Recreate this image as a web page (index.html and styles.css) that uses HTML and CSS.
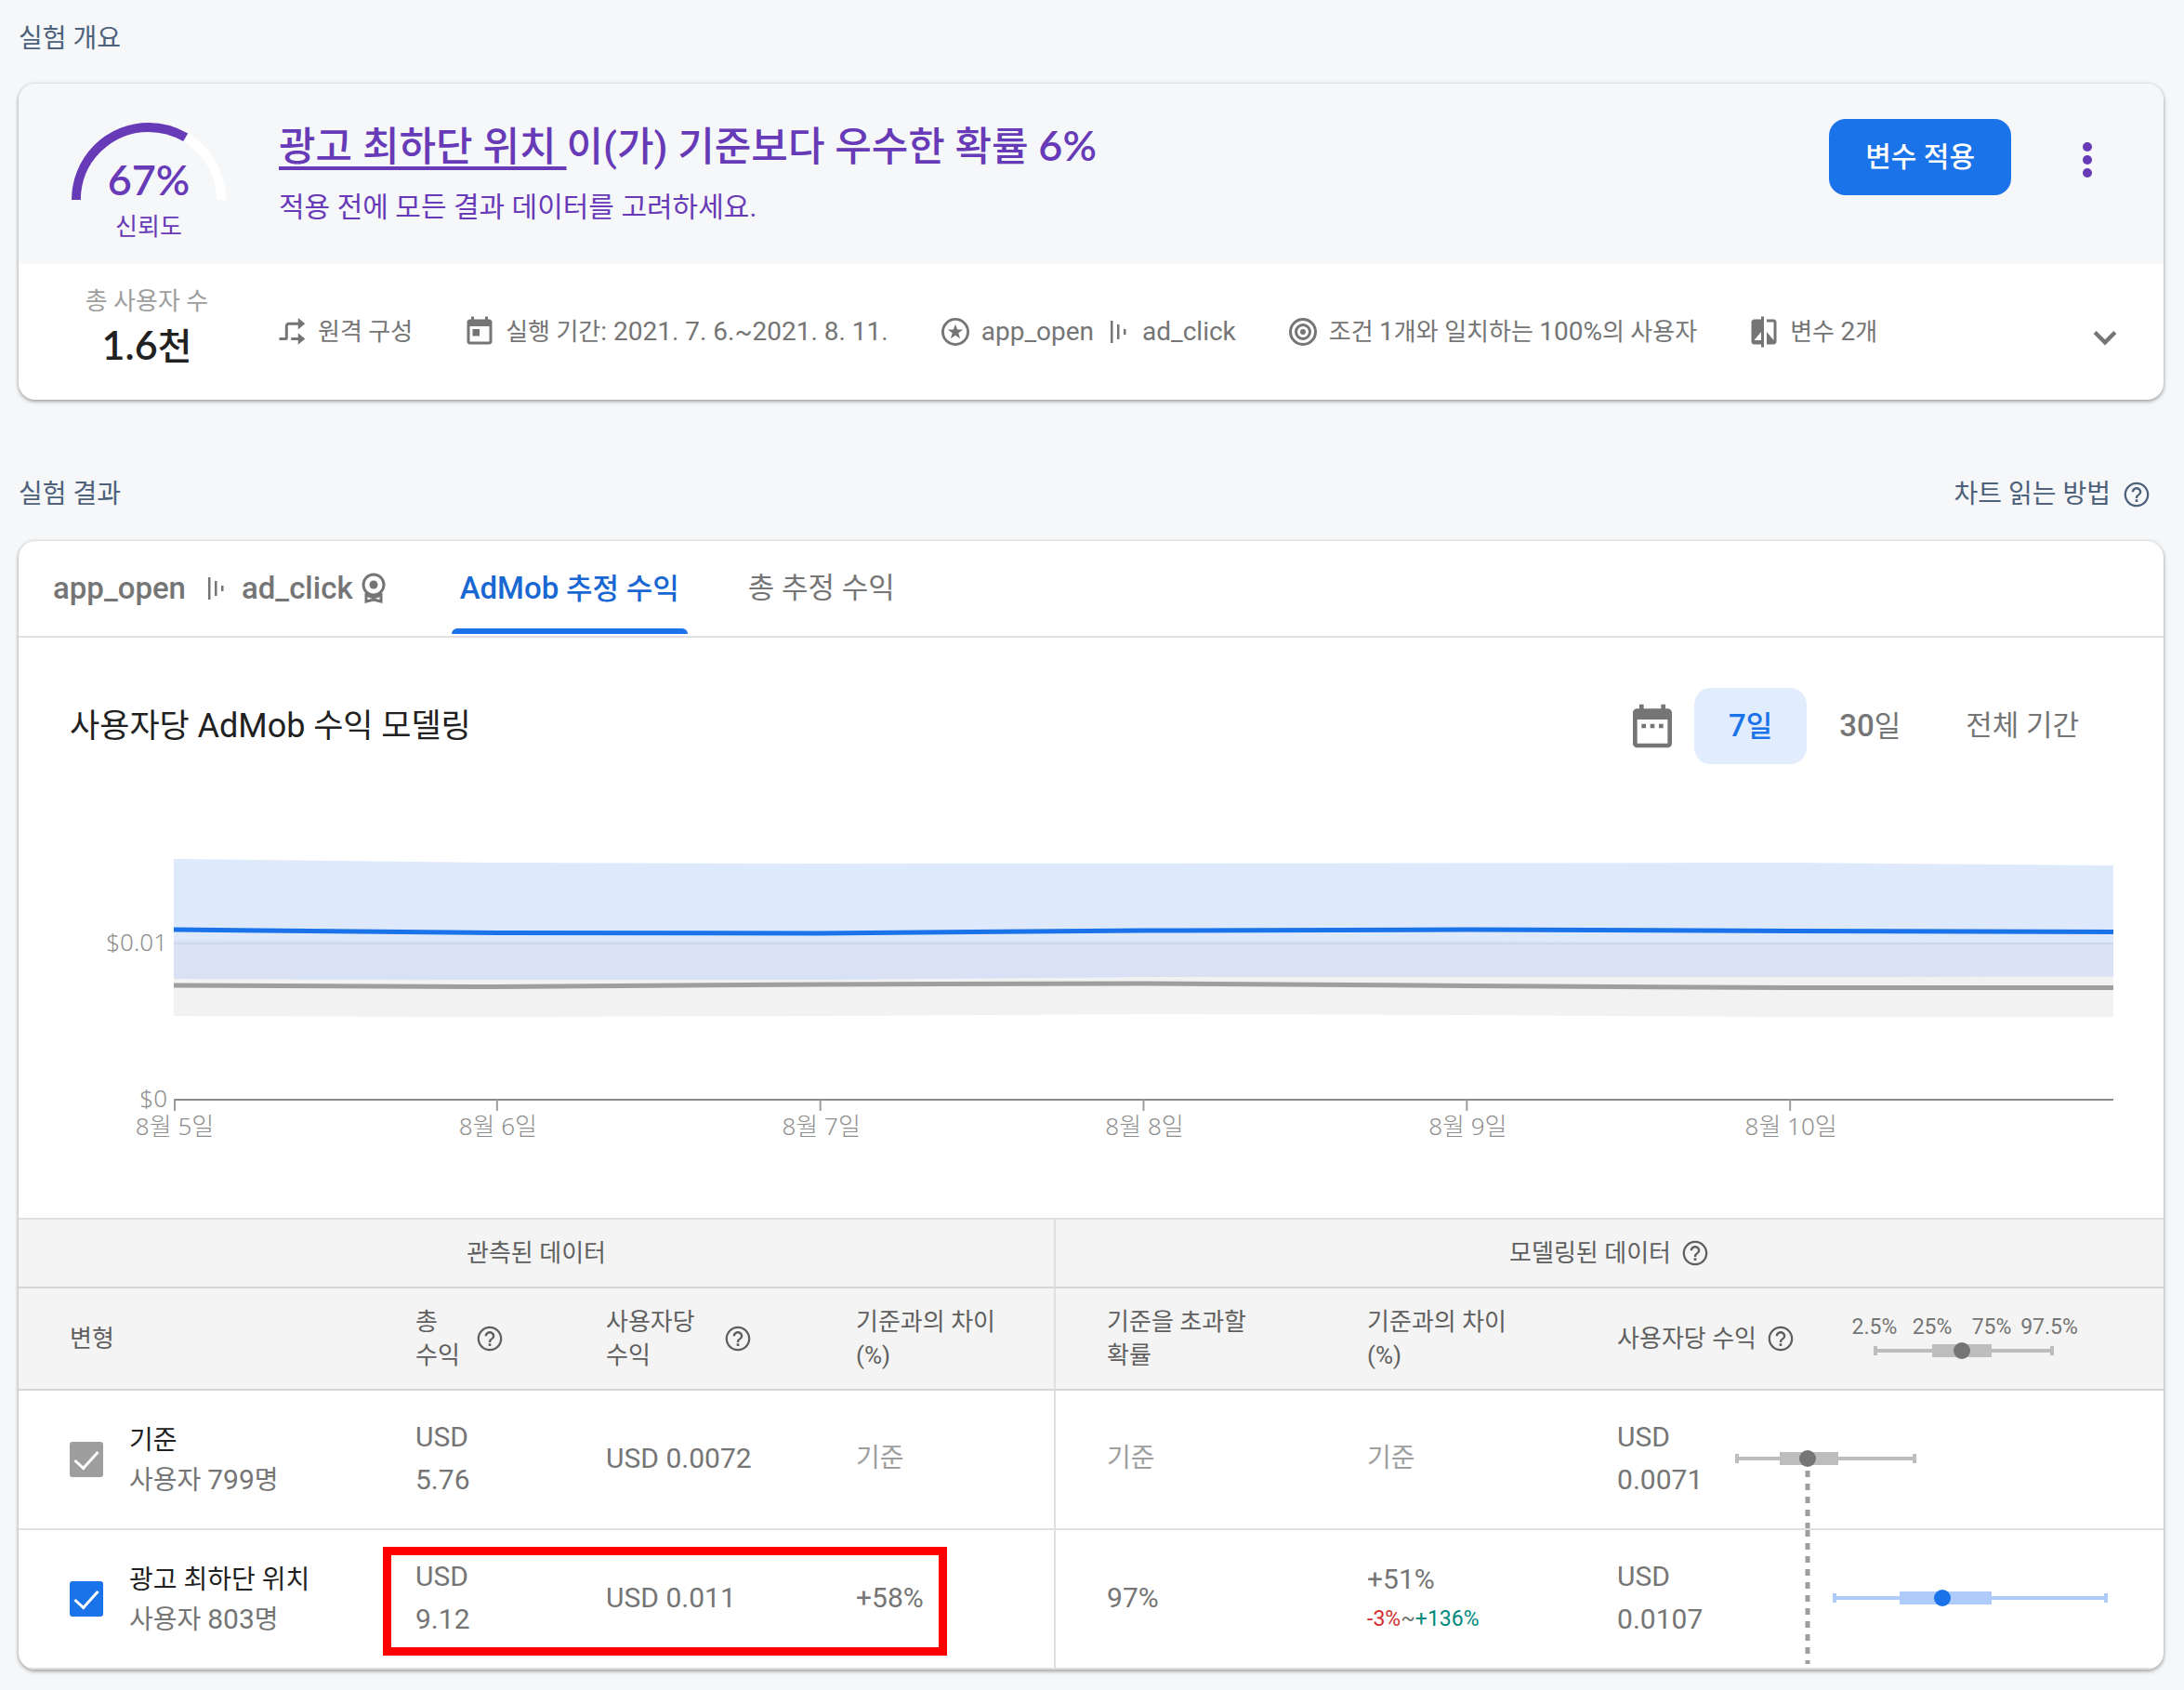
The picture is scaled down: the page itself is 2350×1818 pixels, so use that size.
FILE: index.html
```html
<!DOCTYPE html>
<html lang="ko">
<head>
<meta charset="utf-8">
<meta name="viewport" content="width=device-width, initial-scale=1">
<title>실험 결과</title>
<link rel="stylesheet" href="styles.css">
</head>
<body>
<svg class="sprite" aria-hidden="true">
  <symbol id="help" viewBox="0 0 24 24"><path d="M11 18h2v-2h-2v2zm1-16C6.480 2 2 6.480 2 12s4.480 10 10 10 10-4.480 10-10S17.520 2 12 2zm0 18.300c-4.580 0-8.300-3.720-8.300-8.300S7.420 3.700 12 3.700s8.300 3.720 8.300 8.300-3.720 8.300-8.300 8.300zM12 6c-2.210 0-4 1.790-4 4h1.800c0-1.200.99-2.200 2.200-2.200s2.200 1 2.200 2.200c0 2-3.100 1.750-3.100 5h1.800c0-2.250 3.100-2.500 3.100-5 0-2.210-1.790-4-4-4z"/></symbol>
  <symbol id="funnel" viewBox="0 0 18 24"><path d="M1 0h2.500v24H1zM8 4h2.500v16H8zM15 9h2.500v6H15z"/></symbol>
</svg>
<main class="page">
  <header class="section-head"><h2>실험 개요</h2></header>

  <section class="card overview">
    <div class="summary">
      <div class="gauge">
        <svg class="gauge-arc" viewBox="0 0 168 84"><path class="gauge-track" d="M5 84A79 79 0 0 1 163 84"/><path class="gauge-value" pathLength="100" d="M5 84A79 79 0 0 1 163 84"/></svg>
        <strong>67%</strong>
        <span>신뢰도</span>
      </div>
      <div class="headline">
        <h1><a href="#variant">광고 최하단 위치 </a>이(가) 기준보다 우수한 확률 <span class="latin">6%</span></h1>
        <p>적용 전에 모든 결과 데이터를 고려하세요.</p>
      </div>
      <button class="primary" type="button">변수 적용</button>
      <button class="more" type="button" aria-label="더보기"><svg viewBox="0 0 10 38"><circle cx="5" cy="5" r="5"/><circle cx="5" cy="19" r="5"/><circle cx="5" cy="33" r="5"/></svg></button>
    </div>
    <div class="details">
      <div class="total"><span>총 사용자 수</span><strong><span class="latin">1.6</span>천</strong></div>
      <ul class="meta">
        <li><svg class="icon" viewBox="0 0 24 24"><path d="M3 16h4.200V8c0-1.700 1.100-2.800 2.800-2.800h6.500V2l5 4.200-5 4.200V7.200H10c-.6 0-.8.2-.8.8v8.500c0 .9-.6 1.500-1.500 1.500H3zM11.500 16h5v-3.200l5 4.200-5 4.200V18h-5z"/></svg>원격 구성</li>
        <li><svg class="icon" viewBox="0 0 24 24"><path d="M19 3h-1V1h-2v2H8V1H6v2H5c-1.110 0-2 .9-2 2v14c0 1.100.89 2 2 2h14c1.100 0 2-.9 2-2V5c0-1.100-.9-2-2-2zm0 16H5V8h14v11zM7 10h5v5H7z"/></svg><span>실행 기간<span class="latin">: 2021. 7. 6.~2021. 8. 11.</span></span></li>
        <li><svg class="icon" viewBox="0 0 24 24"><path fill-rule="evenodd" d="M12 2a10 10 0 1 0 0 20 10 10 0 0 0 0-20zm0 1.900a8.100 8.100 0 1 1 0 16.200 8.100 8.100 0 0 1 0-16.200z"/><path d="M12 6.500l1.400 3.900h4.100l-3.300 2.500 1.200 4-3.400-2.400-3.400 2.400 1.200-4-3.300-2.500h4.100z"/></svg><span class="latin">app_open</span><svg class="funnel"><use href="#funnel"/></svg><span class="latin">ad_click</span></li>
        <li><svg class="icon rings" viewBox="0 0 24 24"><circle cx="12" cy="12" r="9"/><circle cx="12" cy="12" r="5"/><circle class="bull" cx="12" cy="12" r="2"/></svg><span>조건 <span class="latin">1</span>개와 일치하는 <span class="latin">100%</span>의 사용자</span></li>
        <li><svg class="icon" viewBox="0 0 24 24"><path d="M10 3H5c-1.100 0-2 .9-2 2v14c0 1.100.9 2 2 2h5v2h2V1h-2v2zm0 15H5l5-6v6zm9-15h-5v2h5v13l-5-6v9h5c1.100 0 2-.9 2-2V5c0-1.100-.9-2-2-2z"/></svg><span>변수 <span class="latin">2</span>개</span></li>
      </ul>
      <button class="expand" type="button" aria-label="펼치기"><svg viewBox="0 0 24 16"><path d="M2 2l10 10L22 2"/></svg></button>
    </div>
  </section>

  <header class="section-head results-head">
    <h2>실험 결과</h2>
    <a href="#help">차트 읽는 방법<svg class="help"><use href="#help"/></svg></a>
  </header>

  <section class="card results">
    <nav class="tabs">
      <button class="tab" type="button"><span class="latin">app_open</span><svg class="funnel"><use href="#funnel"/></svg><span class="latin">ad_click</span><svg class="ribbon" viewBox="0 0 26 34"><path class="ring" d="M13 2a11 11 0 1 1 0 22 11 11 0 0 1 0-22zM5 22v9l8-2 8 2v-9"/><path class="ring" d="M5 24l8 3 8-3"/><circle cx="13" cy="13" r="4.500"/></svg></button>
      <button class="tab active" type="button"><span><span class="latin">AdMob</span> 추정 수익</span></button>
      <button class="tab" type="button">총 추정 수익</button>
    </nav>

    <div class="model">
      <div class="model-head">
        <h3>사용자당 <span class="latin">AdMob</span> 수익 모델링</h3>
        <div class="ranges">
          <svg class="calendar" viewBox="0 0 24 24"><path d="M9 11H7v2h2v-2zm4 0h-2v2h2v-2zm4 0h-2v2h2v-2zm2-7h-1V2h-2v2H8V2H6v2H5c-1.110 0-2 .9-2 2v14c0 1.100.89 2 2 2h14c1.100 0 2-.9 2-2V6c0-1.100-.9-2-2-2zm0 16H5V9h14v11z"/></svg>
          <button class="range active" type="button"><span class="latin">7</span>일</button>
          <button class="range" type="button"><span class="latin">30</span>일</button>
          <button class="range" type="button">전체 기간</button>
        </div>
      </div>
      <div class="chart">
        <div class="y-axis"><span>$0.01</span><span>$0</span></div>
        <svg class="plot" viewBox="0 0 2088 288" preserveAspectRatio="none">
          <path fill="#f2f2f2" d="M0 101L348 102L1044 102L2088 104V184L1740 184L1392 182L1044 181L696 183L348 184L0 183Z"/>
          <path fill="#dfe9fc" d="M0 14L348 18L696 19L1740 18L2088 21V140.500L1740 141L1392 141L1044 141L696 144L348 144L0 143Z"/>
          <path fill="#d8e2f4" d="M0 101L348 102L1044 102L2088 104V140.500L1740 141L1392 141L1044 141L696 144L348 144L0 143Z"/>
          <path class="grid" d="M0 105H2088"/>
          <path class="line base" d="M0 150L348 151.500L696 149L1044 148L1392 150.500L1740 152.500L2088 152.500"/>
          <path class="line variant" d="M0 90L348 93.500L696 94L1044 91L1392 90L1740 91.500L2088 92.500"/>
          <path class="axis" d="M0 273H2088"/>
          <path class="ticks" d="M1 273V285M348 273V285M696 273V285M1044 273V285M1392 273V285M1740 273V285"/>
        </svg>
        <div class="x-axis"><span>8월 5일</span><span>8월 6일</span><span>8월 7일</span><span>8월 8일</span><span>8월 9일</span><span>8월 10일</span></div>
      </div>
    </div>

    <div class="table-wrap">
      <table>
        <colgroup><col class="c-name"><col class="c-total"><col class="c-user"><col class="c-diff"><col class="c-prob"><col class="c-user"><col class="c-rev"><col class="c-range"></colgroup>
        <thead>
          <tr class="groups"><th colspan="4">관측된 데이터</th><th colspan="4" class="split"><span class="with-help">모델링된 데이터<svg class="help"><use href="#help"/></svg></span></th></tr>
          <tr class="columns">
            <th class="name">변형</th>
            <th><span class="with-help stacked">총<br>수익<svg class="help"><use href="#help"/></svg></span></th>
            <th><span class="with-help wide">사용자당<br>수익<svg class="help"><use href="#help"/></svg></span></th>
            <th>기준과의 차이<br>(%)</th>
            <th class="split">기준을 초과할<br>확률</th>
            <th>기준과의 차이<br>(%)</th>
            <th colspan="2"><span class="revenue-head"><span class="with-help">사용자당 수익<svg class="help"><use href="#help"/></svg></span>
              <svg class="legend" viewBox="0 0 250 52"><g class="legend-text"><text x="27" y="23">2.5%</text><text x="89" y="23">25%</text><text x="153" y="23">75%</text><text x="215" y="23">97.5%</text></g><g class="interval"><path d="M27 41H219M28 36V46M218 36V46"/><rect x="89" y="34" width="64" height="14"/><circle cx="121" cy="41" r="9"/></g></svg></span></th>
          </tr>
        </thead>
        <tbody>
          <tr>
            <td class="name"><label><input type="checkbox" checked disabled><span><b>기준</b>사용자 <span class="latin">799</span>명</span></label></td>
            <td>USD<br>5.76</td><td>USD 0.0072</td><td class="baseline">기준</td>
            <td class="split baseline">기준</td><td class="baseline">기준</td><td>USD<br>0.0071</td>
            <td class="cell-range"><svg viewBox="0 0 480 148"><path class="guide" d="M97 86V148"/><g class="interval"><path d="M20 73H213M21 68V78M212 68V78"/><rect x="67" y="66" width="63" height="14"/><circle cx="97" cy="73" r="9"/></g></svg></td>
          </tr>
          <tr id="variant">
            <td class="name"><label><input type="checkbox" checked><span><b>광고 최하단 위치</b>사용자 <span class="latin">803</span>명</span></label></td>
            <td>USD<br>9.12</td><td>USD 0.011</td><td>+58%</td>
            <td class="split">97%</td><td>+51%<small><em class="down">-3%</em>~<em class="up">+136%</em></small></td><td>USD<br>0.0107</td>
            <td class="cell-range"><svg viewBox="0 0 480 148"><path class="guide" d="M97 0V144"/><g class="interval blue"><path d="M125 73H419M126 68V78M418 68V78"/><rect x="196" y="66" width="99" height="14"/><circle cx="242" cy="73" r="9"/></g></svg></td>
          </tr>
        </tbody>
      </table>
      <div class="highlight"></div>
    </div>
  </section>
</main>
</body>
</html>
```
FILE: styles.css
```css
* { box-sizing: border-box; }

body {
  margin: 0;
  background: #f6f7f9;
  color: #757575;
  font: 28px/36px Roboto, "Noto Sans CJK KR", sans-serif;
}

h1, h2, h3, p, ul { margin: 0; padding: 0; font-weight: 400; }
button { border: 0; padding: 0; background: none; color: inherit; font: inherit; cursor: pointer; }
a { color: inherit; }
svg { display: block; flex: none; fill: currentColor; }
.sprite { position: absolute; width: 0; height: 0; }

.page { padding: 24px 22px 22px 20px; }

.section-head {
  display: flex;
  align-items: center;
  justify-content: space-between;
  height: 36px;
  color: #4d617b;
}
.section-head h2 { font-size: 28px; font-weight: 400; }
.section-head a { display: flex; align-items: center; gap: 12px; padding-right: 13px; text-decoration: none; }
.results-head { margin-top: 84px; }
.help { width: 32px; height: 32px; }

.card {
  overflow: hidden;
  border-radius: 18px;
  background: #fff;
  box-shadow: 0 2px 4px rgba(0, 0, 0, .32), 0 0 4px rgba(0, 0, 0, .12);
}
.overview { margin-top: 30px; }
.results { margin-top: 32px; }

/* Overview */
.summary {
  display: flex;
  align-items: flex-start;
  min-height: 194px;
  padding: 38px 77px 0 56px;
  background: #f6f7f9;
  color: #673ab7;
}
.gauge { display: flex; flex-direction: column; align-items: center; width: 168px; padding-top: 4px; }
.gauge-arc { width: 166px; height: 83px; fill: none; stroke-width: 10; }
.gauge-track { stroke: #fff; }
.gauge-value { stroke: #673ab7; stroke-dasharray: 67 100; }
.gauge strong { margin-top: -46px; font: 600 45px/48px Lato, sans-serif; }
.gauge span { margin-top: 9px; font-size: 26px; line-height: 36px; }
.headline { flex: 1; padding-left: 56px; }
.headline h1 { font-size: 43px; font-weight: 500; line-height: 58px; }
.headline .latin { font-family: Lato, sans-serif; font-size: 45px; font-weight: 600; line-height: 1; }
.headline a { font-family: Lato, "Noto Sans CJK KR", sans-serif; text-decoration-thickness: 4px; text-underline-offset: 6px; }
.headline p { margin-top: 16px; font-size: 30px; line-height: 40px; }
.primary { height: 82px; padding: 0 39px; border-radius: 18px; background: #1a73e8; color: #fff; font-size: 30px; font-weight: 500; }
.more { margin: 25px 0 0 77px; }
.more svg { width: 10px; height: 38px; }

.details { display: flex; align-items: center; min-height: 146px; padding: 0 50px 0 56px; }
.total { display: flex; flex-direction: column; align-items: center; width: 164px; margin-right: 4px; padding-bottom: 12px; color: #9e9e9e; font-size: 26px; }
.total strong { margin-top: 4px; color: #212121; font: 500 40px/50px Lato, "Noto Sans CJK KR", sans-serif; }
.total .latin { font-size: 43px; font-weight: 600; }
.meta { display: flex; flex: 1; gap: 54px; padding-left: 52px; list-style: none; font-size: 26px; white-space: nowrap; }
.meta li { display: flex; align-items: center; gap: 10px; }
.meta .latin { font-size: 28px; }
.icon { width: 36px; height: 36px; }
.rings { fill: none; stroke: currentColor; stroke-width: 2; }
.bull { fill: currentColor; stroke: none; }
.funnel { width: 18px; height: 24px; }
.meta .funnel { margin: 0 7px; }
.expand { margin-top: 14px; }
.expand svg { width: 26px; height: 18px; fill: none; stroke: currentColor; stroke-width: 4; }

/* Results */
.tabs { display: flex; gap: 56px; padding: 0 28px; border-bottom: 2px solid #e0e0e0; }
.tab { display: flex; align-items: center; height: 102px; padding: 0 9px; font-size: 31px; }
.tab .latin, .ranges .latin { font-size: 33px; font-weight: 500; }
.tab .funnel { margin: 0 19px 0 23px; }
.ribbon { width: 28px; height: 34px; margin: 0 5px 0 8px; }
.ring { fill: none; stroke: currentColor; stroke-width: 3; }
.tab.active { position: relative; color: #1967d2; font-weight: 500; }
.tab.active::after { content: ""; position: absolute; inset: auto 0 2px; height: 6px; border-radius: 6px 6px 0 0; background: #1a73e8; }

.model { padding: 54px 54px 74px 55px; }
.model-head { display: flex; align-items: center; justify-content: space-between; }
.model-head h3 { color: #212121; font-size: 35px; }
.model-head h3 .latin { font-size: 36px; }
.ranges { display: flex; align-items: center; padding-right: 2px; font-size: 31px; }
.calendar { width: 56px; height: 56px; margin-right: 17px; }
.range { height: 82px; padding: 0 35px; border-radius: 18px; }
.range.active { padding: 0 37px; background: #e1edfc; color: #1a73e8; font-weight: 500; }

.chart {
  display: grid;
  grid-template-columns: 105px 1fr;
  column-gap: 7px;
  margin-top: 88px;
  color: #8e8e8e;
  font: 300 26px/30px "Noto Sans", "Noto Sans CJK KR", sans-serif;
}
.y-axis { display: flex; flex-direction: column; justify-content: space-between; padding: 88px 0 0; height: 286px; text-align: right; }
.plot { width: 100%; height: 288px; }
.grid, .line, .axis, .ticks { fill: none; vector-effect: non-scaling-stroke; }
.grid { stroke: #ccd7ec; stroke-width: 2; }
.line { stroke-width: 5; }
.base { stroke: #9e9e9e; }
.variant { stroke: #1a73e8; }
.axis { stroke: #8a8a8a; stroke-width: 2; }
.ticks { stroke: #9e9e9e; stroke-width: 2; }
.x-axis { grid-column: 2; display: grid; grid-template-columns: repeat(6, 1fr); margin-top: -2px; padding-bottom: 10px; }
.x-axis span { display: flex; justify-content: center; width: 2px; white-space: nowrap; }

/* Table */
.table-wrap { position: relative; }
table { width: 100%; border-spacing: 0; border-top: 2px solid #e0e0e0; table-layout: fixed; }
th, td { padding: 0; border-bottom: 2px solid #e0e0e0; text-align: left; }
th { border-color: #d6d6d6; background: #f4f4f4; color: #5f5f5f; font-size: 26px; font-weight: 400; }
td { height: 150px; padding-bottom: 2px; font-size: 30px; line-height: 46px; }
td.name, td.cell-range { padding-bottom: 0; }
.groups th { height: 74px; text-align: center; }
.columns th { height: 110px; }
.split { border-left: 2px solid #e0e0e0; }
.columns .split, td.split { padding-left: 55px; }
.name { padding-left: 55px; }
.c-name { width: 427px; }
.c-total { width: 205px; }
.c-user { width: 269px; }
.c-diff { width: 213px; }
.c-prob { width: 337px; }
.c-rev { width: 108px; }
.c-range { width: 480px; }
.with-help { display: inline-grid; grid-template-columns: auto 32px; align-items: center; gap: 10px; color: inherit; }
.with-help.stacked { gap: 16px; }
.with-help.wide { gap: 30px; }
.baseline { color: #9e9e9e; font-size: 28px; }
.revenue-head { display: flex; align-items: center; }
.legend { width: 250px; height: 52px; margin: 0 0 4px 58px; }
.legend-text { fill: #757575; font-size: 23px; text-anchor: middle; }
.interval { fill: #bdbdbd; }
.interval path { stroke: #bdbdbd; stroke-width: 4; }
.interval circle { fill: #757575; }
.interval.blue { fill: #aecbfa; }
.interval.blue path { stroke: #aecbfa; }
.interval.blue circle { fill: #1a73e8; }
.guide { stroke: #9e9e9e; stroke-width: 5; stroke-dasharray: 7; }
.cell-range svg { width: 100%; height: 148px; }

label { display: flex; align-items: center; gap: 28px; font-size: 28px; line-height: 42px; }
label > span { padding-top: 2px; }
label b { display: block; color: #212121; font-weight: 400; }
label .latin { font-size: 30px; }
input {
  appearance: none;
  width: 36px;
  height: 38px;
  margin: 0;
  border-radius: 3px;
  background: #1a73e8;
  display: grid;
  place-items: center;
}
input:disabled { background: #9e9e9e; }
input::after { content: ""; width: 11px; height: 22px; margin-top: -6px; border: solid #fff; border-width: 0 3px 3px 0; rotate: 42deg; }

small { display: block; font-size: 23px; line-height: 40px; }
em { font-style: normal; }
.down { color: #d32f2f; }
.up { color: #00897b; }

.highlight { position: absolute; left: 17%; bottom: 15px; width: calc(26% + 7px); height: 117px; border: 9px solid #f00; pointer-events: none; }
```
